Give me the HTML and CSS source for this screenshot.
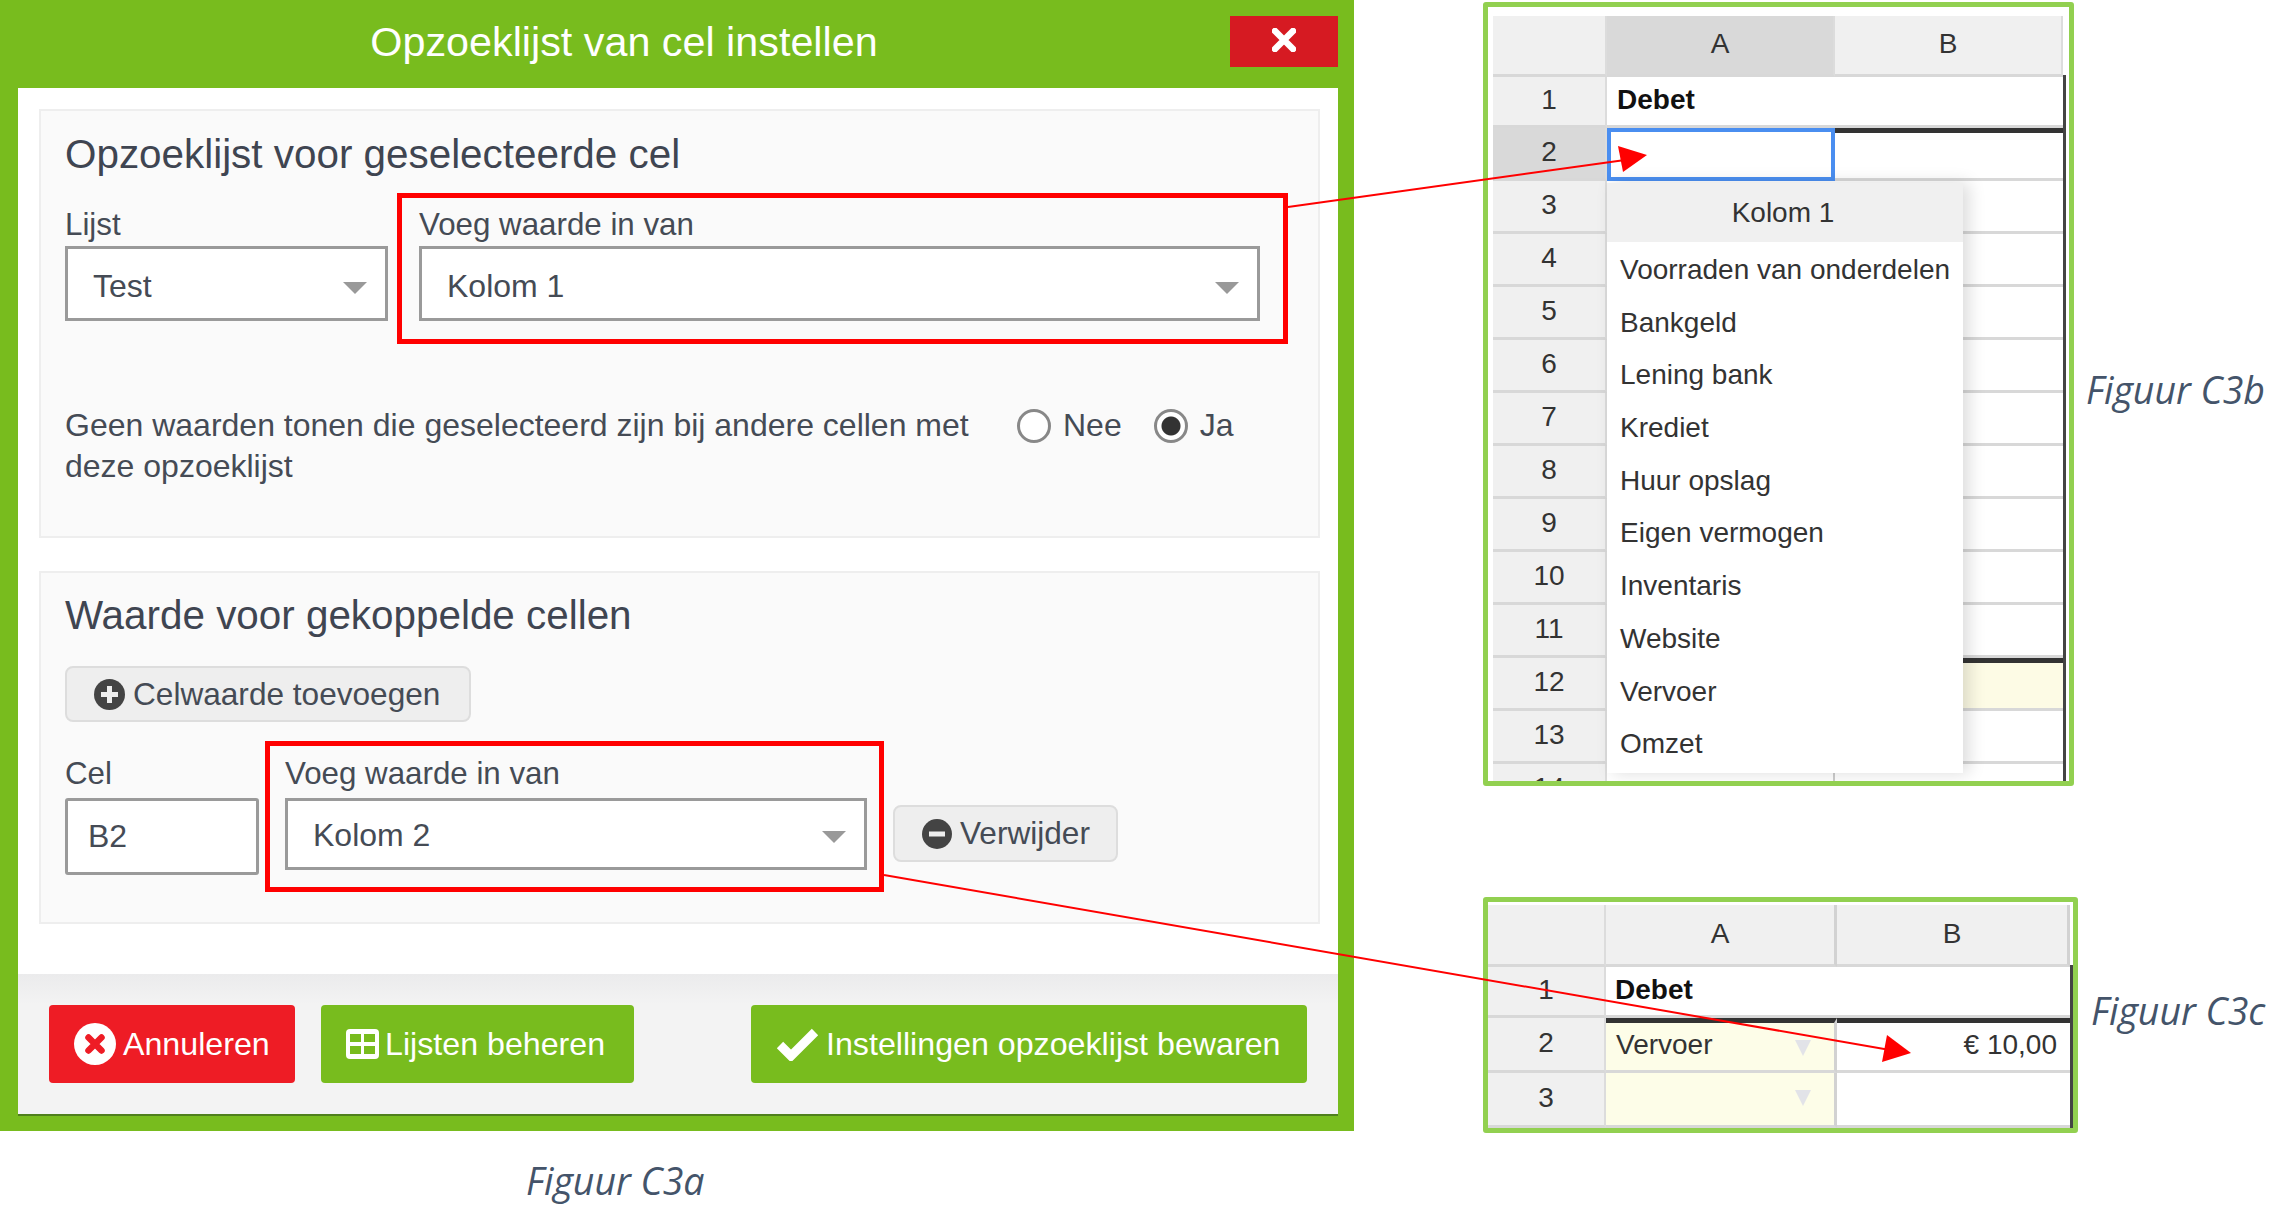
FILE: index.html
```html
<!DOCTYPE html>
<html lang="nl">
  <head>
    <meta charset="UTF-8" />
    <title>Opzoeklijst van cel instellen</title>
    <link rel="stylesheet" href="styles.css">
  </head>
  <body>
    <div class="page">
      <div class="left-col">
        <div class="dialog">
          <div class="dialog-head">
            <div class="dialog-title">Opzoeklijst van cel instellen</div>
            <button class="close-btn">
              <svg width="24" height="24" viewBox="0 0 24 24"><path d="M3 3L21 21M21 3L3 21" stroke="#fff" stroke-width="6.5" stroke-linecap="round" /></svg>
            </button>
          </div>
          <div class="dialog-body">
            <div class="panels">
              <div class="panel panel-list">
                <h2>Opzoeklijst voor geselecteerde cel</h2>
                <div class="field-row">
                  <div class="field field-list">
                    <label>Lijst</label>
                    <div class="select"><span>Test</span><i class="caret"></i></div>
                  </div>
                  <div class="red-box red-box-1">
                    <label>Voeg waarde in van</label>
                    <div class="select"><span>Kolom 1</span><i class="caret"></i></div>
                  </div>
                </div>
                <div class="radio-row">
                  <p>Geen waarden tonen die geselecteerd zijn bij andere cellen met deze opzoeklijst</p>
                  <div class="radio-opts">
                    <i class="radio"></i><span class="radio-label">Nee</span>
                    <i class="radio radio-on"></i><span class="radio-label">Ja</span>
                  </div>
                </div>
              </div>
              <div class="panel panel-link">
                <h2>Waarde voor gekoppelde cellen</h2>
                <button class="btn-grey btn-add">
                  <svg width="31" height="31" viewBox="0 0 31 31"><circle cx="15.5" cy="15.5" r="15.5" fill="#444" /><path d="M15.5 7V24M7 15.5H24" stroke="#eee" stroke-width="5" /></svg>
                  Celwaarde toevoegen
                </button>
                <div class="field-row field-row-link">
                  <div class="field field-cel">
                    <label>Cel</label>
                    <div class="input">B2</div>
                  </div>
                  <div class="red-box red-box-2">
                    <label>Voeg waarde in van</label>
                    <div class="select"><span>Kolom 2</span><i class="caret"></i></div>
                  </div>
                  <button class="btn-grey btn-remove">
                    <svg width="30" height="30" viewBox="0 0 30 30"><circle cx="15" cy="15" r="15" fill="#444" /><path d="M7 15H23" stroke="#eee" stroke-width="5" /></svg>
                    Verwijder
                  </button>
                </div>
              </div>
            </div>
            <div class="dialog-foot">
              <button class="btn btn-red">
                <svg width="42" height="42" viewBox="0 0 42 42"><circle cx="21" cy="21" r="21" fill="#fff" /><path d="M14.5 14.5L27.5 27.5M27.5 14.5L14.5 27.5" stroke="#ee1c25" stroke-width="6.5" stroke-linecap="round" /></svg>
                Annuleren
              </button>
              <button class="btn btn-green btn-lists">
                <svg width="33" height="30" viewBox="0 0 33 30"><rect x="0" y="0" width="33" height="30" rx="4" fill="#fff" /><path d="M4 5H15V13H4ZM18 5H29V13H18ZM4 17H15V25H4ZM18 17H29V25H18Z" fill="#78bc1e" /></svg>
                Lijsten beheren
              </button>
              <button class="btn btn-green btn-save">
                <svg width="43" height="34" viewBox="0 0 43 34"><path d="M4 18L15 29L39 5" fill="none" stroke="#fff" stroke-width="9" /></svg>
                Instellingen opzoeklijst bewaren
              </button>
            </div>
          </div>
        </div>
        <div class="caption caption-a">Figuur C3a</div>
      </div>

      <div class="right-col">
        <div class="figure">
          <div class="sheet sheet-b">
            <div class="grid grid-b">
              <div class="hd"></div><div class="hd hd-on">A</div><div class="hd">B</div>
              <div class="num">1</div><div class="cell cell-bold">Debet</div><div class="cell"></div>
              <div class="num num-on">2</div><div class="cell cell-sel"></div><div class="cell cell-top"></div>
              <div class="num">3</div><div class="cell"></div><div class="cell"></div>
              <div class="num">4</div><div class="cell"></div><div class="cell"></div>
              <div class="num">5</div><div class="cell"></div><div class="cell"></div>
              <div class="num">6</div><div class="cell"></div><div class="cell"></div>
              <div class="num">7</div><div class="cell"></div><div class="cell"></div>
              <div class="num">8</div><div class="cell"></div><div class="cell"></div>
              <div class="num">9</div><div class="cell"></div><div class="cell"></div>
              <div class="num">10</div><div class="cell"></div><div class="cell"></div>
              <div class="num">11</div><div class="cell"></div><div class="cell"></div>
              <div class="num">12</div><div class="cell"></div><div class="cell cell-top cell-yellow"></div>
              <div class="num">13</div><div class="cell"></div><div class="cell"></div>
              <div class="num">14</div><div class="cell cell-tick"></div><div class="cell"></div>
            </div>
            <div class="lookup">
              <div class="lookup-head">Kolom 1</div>
              <ul class="lookup-list">
                <li>Voorraden van onderdelen</li>
                <li>Bankgeld</li>
                <li>Lening bank</li>
                <li>Krediet</li>
                <li>Huur opslag</li>
                <li>Eigen vermogen</li>
                <li>Inventaris</li>
                <li>Website</li>
                <li>Vervoer</li>
                <li>Omzet</li>
              </ul>
            </div>
          </div>
          <div class="caption caption-b">Figuur C3b</div>
        </div>

        <div class="figure figure-c">
          <div class="sheet sheet-c">
            <div class="grid grid-c">
              <div class="hd"></div><div class="hd hd-line">A</div><div class="hd hd-line">B</div>
              <div class="num">1</div><div class="cell cell-bold cell-wide">Debet</div>
              <div class="num">2</div><div class="cell cell-line cell-top cell-cream">Vervoer<i class="drop"></i></div><div class="cell cell-top cell-amount">€ 10,00</div>
              <div class="num">3</div><div class="cell cell-line cell-cream"><i class="drop"></i></div><div class="cell"></div>
            </div>
          </div>
          <div class="caption caption-c">Figuur C3c</div>
        </div>
      </div>

      <svg class="arrows" width="2290" height="1229" viewBox="0 0 2290 1229">
        <path d="M1288 207L1625 160" stroke="#f00" stroke-width="2" fill="none" />
        <path d="M1618 146L1647 155L1623 172Z" fill="#f00" />
        <path d="M884 875L1890 1050" stroke="#f00" stroke-width="2" fill="none" />
        <path d="M1887 1035L1911 1053L1882 1062Z" fill="#f00" />
      </svg>
    </div>
  </body>
</html>
```

FILE: styles.css
```css
body {
  margin: 0;
  background: #fff;
  font-family: "Liberation Sans", Arial, sans-serif;
  color: #454b55;
}

.page {
  position: relative;
  display: flex;
  width: 2290px;
  height: 1229px;
  overflow: hidden;
}

.left-col {
  width: 1354px;
  flex-shrink: 0;
}

.right-col {
  margin-left: 129px;
  padding-top: 2px;
}

/* dialog */
.dialog {
  height: 1131px;
  box-sizing: border-box;
  padding: 0 16px 17px 18px;
  background: #78bc1e;
  display: flex;
  flex-direction: column;
}

.dialog-head {
  height: 88px;
  flex-shrink: 0;
  display: flex;
  align-items: flex-start;
}

.dialog-title {
  flex: 1;
  text-align: center;
  color: #fff;
  font-size: 41.3px;
  line-height: 84px;
}

.close-btn {
  width: 108px;
  height: 51px;
  margin-top: 16px;
  border: none;
  padding: 0 0 3px;
  background: #d61a22;
  display: flex;
  align-items: center;
  justify-content: center;
}

.dialog-body {
  flex: 1;
  background: #fff;
  display: flex;
  flex-direction: column;
  box-shadow: 0 2px 0 #4f7f1c;
}

.panels {
  flex: 1;
  padding: 21px 18px 0 21px;
}

.panel {
  box-sizing: border-box;
  border: 2px solid #eee;
  background: #fafafa;
  padding-left: 24px;
}

.panel-list {
  height: 429px;
  padding-top: 19px;
}

.panel-link {
  height: 353px;
  margin-top: 33px;
  padding-top: 18px;
}

h2 {
  margin: 0;
  font-size: 40.4px;
  font-weight: normal;
  line-height: 48px;
  color: #3f4551;
}

label {
  display: block;
  font-size: 31.3px;
  line-height: 36px;
  margin-bottom: 3px;
}

.field-row {
  display: flex;
  align-items: flex-start;
  margin-top: 15px;
}

.field-list {
  width: 323px;
  padding-top: 14px;
  margin-right: 9px;
}

.select,
.input {
  box-sizing: border-box;
  height: 75px;
  border: 3px solid #9a9a9a;
  background: #fff;
  font-size: 32px;
  display: flex;
  align-items: center;
  justify-content: space-between;
  padding: 5px 18px 0 25px;
}

.caret {
  width: 0;
  height: 0;
  margin-top: 3px;
  border-left: 12px solid transparent;
  border-right: 12px solid transparent;
  border-top: 12px solid #999;
}

.red-box {
  box-sizing: border-box;
  border: 5px solid #f00;
}

.red-box-1 {
  width: 891px;
  height: 151px;
  padding: 9px 23px 0 17px;
}

.radio-row {
  display: flex;
  margin-top: 61px;
}

.radio-row p {
  width: 925px;
  margin: 0;
  font-size: 32px;
  line-height: 41px;
}

.radio-opts {
  height: 41px;
  margin-left: 27px;
  display: flex;
  align-items: center;
  font-size: 32px;
}

.radio {
  box-sizing: border-box;
  width: 34px;
  height: 34px;
  border: 3px solid #888;
  border-radius: 50%;
  background: #fff;
}

.radio-on {
  background: radial-gradient(circle, #333 0 9px, #fff 10px);
}

.radio-label {
  margin-left: 12px;
  margin-right: 32px;
}

.btn-grey {
  box-sizing: border-box;
  display: flex;
  align-items: center;
  gap: 8px;
  border: 2px solid #ddd;
  border-radius: 8px;
  background: #eee;
  color: #454b55;
  font-family: inherit;
  font-size: 31.6px;
  padding: 0 0 0 27px;
}

.btn-add {
  width: 406px;
  height: 56px;
  margin-top: 27px;
}

.field-row-link {
  margin-top: 19px;
}

.field-cel {
  width: 194px;
  padding-top: 14px;
  margin-right: 6px;
}

.field-cel label,
.red-box-2 label {
  margin-bottom: 6px;
  padding-top: 1px;
}

.input {
  height: 77px;
  padding: 0 0 0 20px;
  border-radius: 3px;
}

.red-box-2 {
  width: 619px;
  height: 151px;
  padding: 9px 12px 0 15px;
}

.red-box-2 .select {
  height: 72px;
  padding-top: 2px;
}

.btn-remove {
  width: 225px;
  height: 57px;
  margin: 64px 0 0 9px;
}

.dialog-foot {
  height: 140px;
  box-sizing: border-box;
  padding: 31px 31px 0;
  background: linear-gradient(#ebebec, #f3f3f3 30px);
  display: flex;
  align-items: flex-start;
  gap: 26px;
}

.btn {
  height: 78px;
  border: none;
  border-radius: 4px;
  color: #fff;
  font-family: inherit;
  font-size: 32.2px;
  display: flex;
  align-items: center;
  padding: 0 0 0 25px;
}

.btn-red {
  width: 246px;
  background: #ee1c25;
  gap: 7px;
}

.btn-green {
  background: #78bc1e;
}

.btn-lists {
  width: 313px;
  gap: 6px;
}

.btn-save {
  width: 556px;
  margin-left: auto;
  gap: 7px;
}

/* figure captions */
.caption {
  font-family: "Open Sans", sans-serif;
  font-style: italic;
  font-size: 37.5px;
  line-height: 44px;
  color: #44546a;
}

.caption-a {
  margin-top: 28px;
  padding-left: 526px;
}

.caption-b {
  margin: 0 0 8px 12px;
}

.caption-c {
  margin: 0 0 8px 13px;
}

/* spreadsheet pictures */
.figure {
  display: flex;
  align-items: center;
}

.figure-c {
  margin-top: 111px;
}

.sheet {
  position: relative;
  box-sizing: border-box;
  flex-shrink: 0;
  border: 5px solid #92d050;
  border-radius: 3px;
  background: #fff;
  overflow: hidden;
}

/* thick right edge of the sheet's table */
.sheet::after {
  content: "";
  position: absolute;
  bottom: 0;
  width: 3px;
  background: #444;
}

.sheet-b {
  width: 591px;
  height: 784px;
  padding: 9px 0 0 5px;
}

.sheet-b::after {
  left: 575px;
  top: 68px;
}

.sheet-c {
  width: 595px;
  height: 236px;
  padding-top: 3px;
}

.sheet-c::after {
  left: 582px;
  top: 63px;
}

.grid {
  display: grid;
  font-size: 28px;
  color: #333;
}

.grid-b {
  grid-template-columns: 114px 228px 228px;
  grid-template-rows: 61px 51px repeat(13, 53px);
}

.grid-c {
  grid-template-columns: 118px 231px 233px;
  grid-template-rows: 62px 51px 55px 55px;
}

.hd,
.num {
  box-sizing: border-box;
  display: flex;
  align-items: center;
  justify-content: center;
  background: #f0f0f0;
  border-bottom: 3px solid #d8d8d8;
  border-right: 2px solid #dcdcdc;
  padding-bottom: 2px;
}

.hd-on,
.num-on {
  background: #d9d9d9;
}

.hd-line {
  border-right: 3px solid #d2d2d2;
}

.cell {
  position: relative;
  box-sizing: border-box;
  display: flex;
  align-items: center;
  padding: 0 0 3px 10px;
  border-bottom: 3px solid #d8d8d8;
  background: #fff;
}

.cell-bold {
  font-weight: bold;
  color: #111;
}

.cell-wide {
  grid-column: span 2;
  padding-left: 9px;
}

.cell-top {
  border-top: 5px solid #333;
}

.cell-sel {
  border: 4px solid #4a8ef0;
}

.cell-yellow {
  background: #fdfbe5;
}

.cell-cream {
  background: #fdfde8;
}

.cell-tick {
  border-right: 2px solid #ccc;
}

.cell-line {
  border-right: 3px solid #d2d2d2;
}

.cell-amount {
  justify-content: flex-end;
  padding-right: 13px;
}

.drop {
  position: absolute;
  right: 23px;
  top: 17px;
  border-left: 8px solid transparent;
  border-right: 8px solid transparent;
  border-top: 16px solid #e2e3e8;
}

.lookup {
  position: absolute;
  left: 119px;
  top: 176px;
  width: 356px;
  height: 590px;
  background: #fff;
  font-size: 28px;
  color: #333;
  box-shadow: 6px 0 16px rgba(0, 0, 0, 0.14);
}

.lookup-head {
  height: 59px;
  padding-right: 4px;
  background: #f0f0f0;
  text-align: center;
  line-height: 59px;
}

.lookup-list {
  list-style: none;
  margin: 0;
  padding: 2px 0 0 13px;
}

.lookup-list li {
  height: 52.7px;
  line-height: 52px;
}

.arrows {
  position: absolute;
  left: 0;
  top: 0;
  pointer-events: none;
}
```
